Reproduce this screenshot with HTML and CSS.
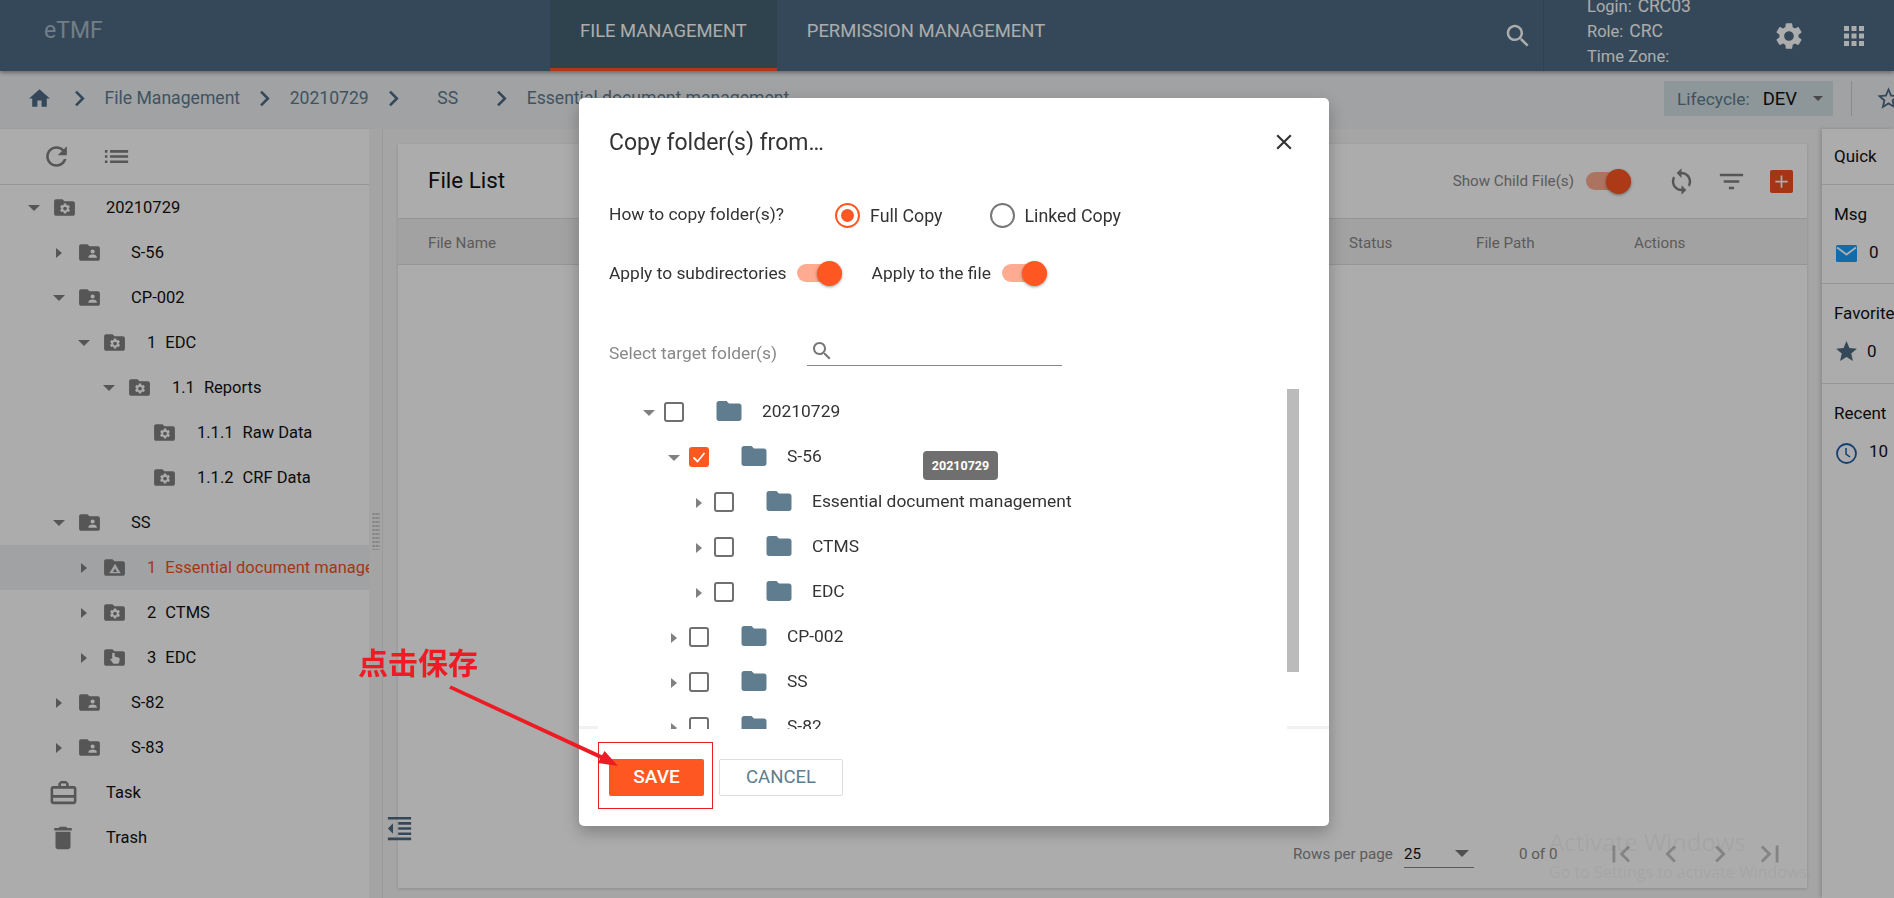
FILE: index.html
```html
<!DOCTYPE html>
<html lang="en">
<head>
<meta charset="utf-8">
<title>eTMF</title>
<link rel="stylesheet" href="styles.css">
</head>
<body>
<svg class="sprite" xmlns="http://www.w3.org/2000/svg">
  <symbol id="i-gear" viewBox="0 0 24 24"><path d="M19.14 12.94c.04-.3.06-.61.06-.94 0-.32-.02-.64-.07-.94l2.03-1.58c.18-.14.23-.41.12-.61l-1.92-3.32c-.12-.22-.37-.29-.59-.22l-2.39.96c-.5-.38-1.03-.7-1.62-.94l-.36-2.54c-.04-.24-.24-.41-.48-.41h-3.84c-.24 0-.43.17-.47.41l-.36 2.54c-.59.24-1.13.57-1.62.94l-2.39-.96c-.22-.08-.47 0-.59.22L2.74 8.87c-.12.21-.08.47.12.61l2.03 1.58c-.05.3-.09.63-.09.94s.02.64.07.94l-2.03 1.58c-.18.14-.23.41-.12.61l1.92 3.32c.12.22.37.29.59.22l2.39-.96c.5.38 1.03.7 1.62.94l.36 2.54c.05.24.24.41.48.41h3.84c.24 0 .44-.17.47-.41l.36-2.54c.59-.24 1.13-.56 1.62-.94l2.39.96c.22.08.47 0 .59-.22l1.92-3.32c.12-.22.07-.47-.12-.61l-2.01-1.58zM12 15.6c-1.98 0-3.6-1.62-3.6-3.6s1.62-3.6 3.6-3.6 3.6 1.62 3.6 3.6-1.62 3.6-3.6 3.6z"/></symbol>
  <symbol id="i-folder" viewBox="0 0 24 24"><path d="M10 4H4c-1.1 0-2 .9-2 2v12c0 1.1.9 2 2 2h16c1.1 0 2-.9 2-2V8c0-1.1-.9-2-2-2h-8l-2-2z"/></symbol>
  <symbol id="f-person" viewBox="0 0 24 24"><path fill-rule="evenodd" d="M20 6h-8l-2-2H4c-1.1 0-2 .9-2 2v12c0 1.1.9 2 2 2h16c1.1 0 2-.9 2-2V8c0-1.1-.9-2-2-2zM15 9a2 2 0 1 1 0 4a2 2 0 0 1 0-4zM19 17h-8v-1c0-1.33 2.67-2 4-2s4 .67 4 2v1z"/></symbol>
  <symbol id="f-gear" viewBox="0 0 24 24"><path d="M10 4H4c-1.1 0-2 .9-2 2v12c0 1.1.9 2 2 2h16c1.1 0 2-.9 2-2V8c0-1.1-.9-2-2-2h-8l-2-2z"/><g fill="#fff" transform="translate(12.5 13) scale(.5) translate(-12 -12)"><path d="M19.14 12.94c.04-.3.06-.61.06-.94 0-.32-.02-.64-.07-.94l2.03-1.58c.18-.14.23-.41.12-.61l-1.92-3.32c-.12-.22-.37-.29-.59-.22l-2.39.96c-.5-.38-1.03-.7-1.62-.94l-.36-2.54c-.04-.24-.24-.41-.48-.41h-3.84c-.24 0-.43.17-.47.41l-.36 2.54c-.59.24-1.13.57-1.62.94l-2.39-.96c-.22-.08-.47 0-.59.22L2.74 8.87c-.12.21-.08.47.12.61l2.03 1.58c-.05.3-.09.63-.09.94s.02.64.07.94l-2.03 1.58c-.18.14-.23.41-.12.61l1.92 3.32c.12.22.37.29.59.22l2.39-.96c.5.38 1.03.7 1.62.94l.36 2.54c.05.24.24.41.48.41h3.84c.24 0 .44-.17.47-.41l.36-2.54c.59-.24 1.13-.56 1.62-.94l2.39.96c.22.08.47 0 .59-.22l1.92-3.32c.12-.22.07-.47-.12-.61l-2.01-1.58zM12 15.6c-1.98 0-3.6-1.62-3.6-3.6s1.62-3.6 3.6-3.6 3.6 1.62 3.6 3.6-1.62 3.6-3.6 3.6z"/></g></symbol>
  <symbol id="f-drive" viewBox="0 0 24 24"><path fill-rule="evenodd" d="M20 6h-8l-2-2H4c-1.1 0-2 .9-2 2v12c0 1.1.9 2 2 2h16c1.1 0 2-.9 2-2V8c0-1.1-.9-2-2-2zM12.500 8.500l5.500 9H7zM12.500 13l-2 3.200h4z"/></symbol>
  <symbol id="f-hand" viewBox="0 0 24 24"><path fill-rule="evenodd" d="M20 6h-8l-2-2H4c-1.1 0-2 .9-2 2v12c0 1.1.9 2 2 2h16c1.1 0 2-.9 2-2V8c0-1.1-.9-2-2-2zM11 7.500c.7 0 1.200.5 1.200 1.200V11l4 1.200c.5.2.8.6.8 1.100l-.5 3.300c-.1.8-.7 1.400-1.500 1.400h-3.300c-.5 0-.9-.2-1.200-.6L7.800 13.700l.8-.8 1.200.7V8.700c0-.7.5-1.200 1.200-1.200z"/></symbol>
  <symbol id="i-home" viewBox="0 0 24 24"><path d="M10 20v-6h4v6h5v-8h3L12 3 2 12h3v8z"/></symbol>
  <symbol id="i-chev" viewBox="0 0 24 24"><path d="M10 6L8.590 7.410 13.170 12l-4.580 4.590L10 18l6-6z"/></symbol>
  <symbol id="i-prev" viewBox="0 0 24 24"><path d="M15.410 7.410L14 6l-6 6 6 6 1.410-1.410L10.830 12z"/></symbol>
  <symbol id="i-first" viewBox="0 0 24 24"><path d="M18.410 16.590L13.820 12l4.590-4.590L17 6l-6 6 6 6zM6 6h2v12H6z"/></symbol>
  <symbol id="i-last" viewBox="0 0 24 24"><path d="M5.590 7.410L10.180 12l-4.590 4.590L7 18l6-6-6-6zM16 6h2v12h-2z"/></symbol>
  <symbol id="i-search" viewBox="0 0 24 24"><path d="M15.500 14h-.79l-.28-.27C15.410 12.590 16 11.110 16 9.500 16 5.910 13.090 3 9.500 3S3 5.910 3 9.500 5.910 16 9.500 16c1.610 0 3.090-.59 4.230-1.570l.27.28v.79l5 4.990L20.490 19l-4.990-5zm-6 0C7.010 14 5 11.990 5 9.500S7.010 5 9.500 5 14 7.010 14 9.500 11.990 14 9.500 14z"/></symbol>
  <symbol id="i-apps" viewBox="0 0 24 24"><path d="M4 8h4V4H4v4zm6 12h4v-4h-4v4zm-6 0h4v-4H4v4zm0-6h4v-4H4v4zm6 0h4v-4h-4v4zm6-10v4h4V4h-4zm-6 4h4V4h-4v4zm6 6h4v-4h-4v4zm0 6h4v-4h-4v4z"/></symbol>
  <symbol id="i-staro" viewBox="0 0 24 24"><path d="M22 9.240l-7.190-.62L12 2 9.190 8.630 2 9.240l5.460 4.730L5.820 21 12 17.270 18.180 21l-1.630-7.030L22 9.240zM12 15.400l-3.760 2.270 1-4.280-3.320-2.880 4.380-.38L12 6.100l1.710 4.040 4.380.38-3.320 2.880 1 4.280L12 15.400z"/></symbol>
  <symbol id="i-star" viewBox="0 0 24 24"><path d="M12 17.270L18.180 21l-1.640-7.030L22 9.240l-7.190-.61L12 2 9.190 8.630 2 9.240l5.460 4.730L5.820 21z"/></symbol>
  <symbol id="i-refresh" viewBox="0 0 24 24"><path d="M17.650 6.350C16.200 4.900 14.210 4 12 4c-4.420 0-7.990 3.580-7.990 8s3.570 8 7.990 8c3.730 0 6.840-2.550 7.730-6h-2.080c-.82 2.330-3.040 4-5.650 4-3.310 0-6-2.690-6-6s2.690-6 6-6c1.660 0 3.140.69 4.220 1.780L13 11h7V4l-2.350 2.350z"/></symbol>
  <symbol id="i-list" viewBox="0 0 24 24"><path d="M3 13h2v-2H3v2zm0 4h2v-2H3v2zm0-8h2V7H3v2zm4 4h14v-2H7v2zm0 4h14v-2H7v2zM7 7v2h14V7H7z"/></symbol>
  <symbol id="i-task" viewBox="0 0 24 24"><path fill-rule="evenodd" d="M20 7h-4V5l-2-2h-4L8 5v2H4c-1.100 0-2 .9-2 2v10c0 1.100.9 2 2 2h16c1.100 0 2-.9 2-2V9c0-1.100-.9-2-2-2zM10 5h4v2h-4V5zM4 9h16v5H4V9zm0 7h16v3H4v-3z"/></symbol>
  <symbol id="i-trash" viewBox="0 0 24 24"><path d="M6 19c0 1.100.9 2 2 2h8c1.100 0 2-.9 2-2V7H6v12zM19 4h-3.500l-1-1h-5l-1 1H5v2h14V4z"/></symbol>
  <symbol id="i-sync" viewBox="0 0 24 24"><path d="M12 4V1L8 5l4 4V6c3.310 0 6 2.690 6 6 0 1.010-.25 1.970-.7 2.800l1.460 1.460C19.540 15.030 20 13.570 20 12c0-4.420-3.580-8-8-8zm0 14c-3.310 0-6-2.690-6-6 0-1.010.25-1.970.7-2.800L5.240 7.740C4.460 8.970 4 10.430 4 12c0 4.420 3.580 8 8 8v3l4-4-4-4v3z"/></symbol>
  <symbol id="i-filter" viewBox="0 0 24 24"><path d="M10 18h4v-2h-4v2zM3 6v2h18V6H3zm3 7h12v-2H6v2z"/></symbol>
  <symbol id="i-indent" viewBox="0 0 24 24"><path d="M11 17h10v-2H11v2zm-8-5l4 4V8l-4 4zm0 9h18v-2H3v2zM3 3v2h18V3H3zm8 6h10V7H11v2zm0 4h10v-2H11v2z"/></symbol>
  <symbol id="i-close" viewBox="0 0 24 24"><path d="M19 6.410L17.590 5 12 10.590 6.410 5 5 6.410 10.590 12 5 17.590 6.410 19 12 13.410 17.590 19 19 17.590 13.410 12z"/></symbol>
</svg>

<div class="page">
  <header class="topbar">
    <div class="logo">eTMF</div>
    <nav class="tabs">
      <a class="tab tab-active">FILE MANAGEMENT</a>
      <a class="tab">PERMISSION MANAGEMENT</a>
    </nav>
    <svg class="ic ic-search-top"><use href="#i-search"/></svg>
    <div class="userinfo">
      <div>Login:<span class="uv">CRC03</span></div>
      <div>Role:<span class="uv">CRC</span></div>
      <div>Time Zone:</div>
    </div>
    <svg class="ic ic-gear-top"><use href="#i-gear"/></svg>
    <svg class="ic ic-apps-top"><use href="#i-apps"/></svg>
  </header>

  <div class="crumbs">
    <svg class="ic ic-home"><use href="#i-home"/></svg>
    <svg class="ic ic-chev"><use href="#i-chev"/></svg>
    <span class="crumb">File Management</span>
    <svg class="ic ic-chev"><use href="#i-chev"/></svg>
    <span class="crumb">20210729</span>
    <svg class="ic ic-chev"><use href="#i-chev"/></svg>
    <span class="crumb crumb-wide">SS</span>
    <svg class="ic ic-chev"><use href="#i-chev"/></svg>
    <span class="crumb">Essential document management</span>
    <div class="lifecycle">
      <span class="lc-label">Lifecycle:</span>
      <span class="lc-value">DEV</span>
      <span class="caret"></span>
    </div>
    <span class="crumb-divider"></span>
    <svg class="ic ic-staro"><use href="#i-staro"/></svg>
  </div>

  <div class="workspace">
    <aside class="sidebar">
      <div class="side-tools">
        <svg class="ic ic-refresh"><use href="#i-refresh"/></svg>
        <svg class="ic ic-list"><use href="#i-list"/></svg>
      </div>
      <div class="side-tree">
        <div class="node l0"><span class="arr arr-down"></span><svg class="ic nf"><use href="#f-gear"/></svg><span class="nt">20210729</span></div>
        <div class="node l1"><span class="arr arr-right"></span><svg class="ic nf"><use href="#f-person"/></svg><span class="nt">S-56</span></div>
        <div class="node l1"><span class="arr arr-down"></span><svg class="ic nf"><use href="#f-person"/></svg><span class="nt">CP-002</span></div>
        <div class="node l2"><span class="arr arr-down"></span><svg class="ic nf"><use href="#f-gear"/></svg><span class="nt nt-num"><b>1</b>EDC</span></div>
        <div class="node l3"><span class="arr arr-down"></span><svg class="ic nf"><use href="#f-gear"/></svg><span class="nt nt-num"><b>1.1</b>Reports</span></div>
        <div class="node l4"><span class="arr"></span><svg class="ic nf"><use href="#f-gear"/></svg><span class="nt nt-num"><b>1.1.1</b>Raw Data</span></div>
        <div class="node l4"><span class="arr"></span><svg class="ic nf"><use href="#f-gear"/></svg><span class="nt nt-num"><b>1.1.2</b>CRF Data</span></div>
        <div class="node l1"><span class="arr arr-down"></span><svg class="ic nf"><use href="#f-person"/></svg><span class="nt">SS</span></div>
        <div class="node l2 node-sel"><span class="arr arr-right"></span><svg class="ic nf"><use href="#f-drive"/></svg><span class="nt nt-num"><b>1</b>Essential document management</span></div>
        <div class="node l2"><span class="arr arr-right"></span><svg class="ic nf"><use href="#f-gear"/></svg><span class="nt nt-num"><b>2</b>CTMS</span></div>
        <div class="node l2"><span class="arr arr-right"></span><svg class="ic nf"><use href="#f-hand"/></svg><span class="nt nt-num"><b>3</b>EDC</span></div>
        <div class="node l1"><span class="arr arr-right"></span><svg class="ic nf"><use href="#f-person"/></svg><span class="nt">S-82</span></div>
        <div class="node l1"><span class="arr arr-right"></span><svg class="ic nf"><use href="#f-person"/></svg><span class="nt">S-83</span></div>
        <div class="node node-task"><svg class="ic ic-task"><use href="#i-task"/></svg><span class="nt-plain">Task</span></div>
        <div class="node node-trash"><svg class="ic ic-trash"><use href="#i-trash"/></svg><span class="nt-plain">Trash</span></div>
      </div>
    </aside>

    <div class="splitter"><span class="grip"></span></div>

    <main class="content">
      <section class="card">
        <div class="card-head">
          <h2 class="card-title">File List</h2>
          <span class="show-child">Show Child File(s)</span>
          <span class="toggle toggle-page"><span class="thumb"></span></span>
          <svg class="ic ic-sync"><use href="#i-sync"/></svg>
          <svg class="ic ic-filter"><use href="#i-filter"/></svg>
          <span class="plus-btn">
            <svg viewBox="0 0 24 24" class="ic plus-glyph"><path d="M19 13h-6v6h-2v-6H5v-2h6V5h2v6h6v2z"/></svg>
          </span>
        </div>
        <div class="thead">
          <span>File Name</span><span>Status</span><span>File Path</span><span>Actions</span>
        </div>
        <div class="tbody"></div>
        <div class="pager">
          <span class="pg-label">Rows per page</span>
          <span class="pg-select"><span>25</span><span class="pg-caret"></span></span>
          <span class="pg-count">0 of 0</span>
          <svg class="ic pg-ic pg-first"><use href="#i-first"/></svg>
          <svg class="ic pg-ic pg-prev"><use href="#i-prev"/></svg>
          <svg class="ic pg-ic pg-next"><use href="#i-chev"/></svg>
          <svg class="ic pg-ic pg-last"><use href="#i-last"/></svg>
        </div>
      </section>
      <svg class="ic ic-indent"><use href="#i-indent"/></svg>
    </main>

    <aside class="quick">
      <div class="q-head">Quick</div>
      <div class="q-sec q-msg">
        <div class="q-title">Msg</div>
        <div class="q-row">
          <svg class="q-ic" viewBox="0 0 21 17"><rect width="21" height="17" rx="1.500" fill="#18a0ff"/><path d="M1 2.500l9.500 7 9.500-7" fill="none" stroke="#fff" stroke-width="2"/></svg>
          <span>0</span>
        </div>
      </div>
      <div class="q-sec q-fav">
        <div class="q-title">Favorite</div>
        <div class="q-row">
          <svg class="q-star"><use href="#i-star"/></svg>
          <span>0</span>
        </div>
      </div>
      <div class="q-sec q-rec">
        <div class="q-title">Recent</div>
        <div class="q-row">
          <svg class="q-ic q-clock" viewBox="0 0 21 21"><circle cx="10.500" cy="10.500" r="9.500" fill="none" stroke="#1e5fa8" stroke-width="1.800"/><path d="M10 5v6l4 3" fill="none" stroke="#1e5fa8" stroke-width="1.500"/></svg>
          <span>10</span>
        </div>
      </div>
    </aside>
  </div>
</div>

<div class="overlay"></div>

<div class="modal">
  <div class="m-head">
    <h1 class="m-title">Copy folder(s) from…</h1>
    <svg class="ic m-close"><use href="#i-close"/></svg>
  </div>
  <div class="m-row m-radios">
    <span class="m-label">How to copy folder(s)?</span>
    <span class="radio radio-on"><span class="dot"></span></span>
    <span class="m-text">Full Copy</span>
    <span class="radio radio-2"></span>
    <span class="m-text">Linked Copy</span>
  </div>
  <div class="m-row m-toggles">
    <span class="m-label">Apply to subdirectories</span>
    <span class="toggle toggle-a"><span class="thumb"></span></span>
    <span class="m-label m-file">Apply to the file</span>
    <span class="toggle toggle-b"><span class="thumb"></span></span>
  </div>
  <div class="m-row m-search">
    <span class="m-muted">Select target folder(s)</span>
    <span class="m-input"><svg class="ic m-search-ic"><use href="#i-search"/></svg></span>
  </div>
  <div class="m-tree">
    <div class="dn d0"><span class="arr arr-down"></span><span class="cb"></span><svg class="ic df"><use href="#i-folder"/></svg><span class="dt">20210729</span></div>
    <div class="dn d1"><span class="arr arr-down"></span><span class="cb cb-on"><svg viewBox="0 0 20 20" class="cb-tick"><path d="M4.500 10.500l4 4 7-8.500" fill="none" stroke="#fff" stroke-width="1.800"/></svg></span><svg class="ic df"><use href="#i-folder"/></svg><span class="dt">S-56</span></div>
    <div class="dn d2"><span class="arr arr-right"></span><span class="cb"></span><svg class="ic df"><use href="#i-folder"/></svg><span class="dt">Essential document management</span></div>
    <div class="dn d2"><span class="arr arr-right"></span><span class="cb"></span><svg class="ic df"><use href="#i-folder"/></svg><span class="dt">CTMS</span></div>
    <div class="dn d2"><span class="arr arr-right"></span><span class="cb"></span><svg class="ic df"><use href="#i-folder"/></svg><span class="dt">EDC</span></div>
    <div class="dn d1"><span class="arr arr-right"></span><span class="cb"></span><svg class="ic df"><use href="#i-folder"/></svg><span class="dt">CP-002</span></div>
    <div class="dn d1"><span class="arr arr-right"></span><span class="cb"></span><svg class="ic df"><use href="#i-folder"/></svg><span class="dt">SS</span></div>
    <div class="dn d1"><span class="arr arr-right"></span><span class="cb"></span><svg class="ic df"><use href="#i-folder"/></svg><span class="dt">S-82</span></div>
  </div>
  <div class="m-foot">
    <button class="btn btn-save">SAVE</button>
    <button class="btn btn-cancel">CANCEL</button>
  </div>
  <div class="tooltip">20210729</div>
</div>

<div class="watermark">
  <div class="wm-1">Activate Windows</div>
  <div class="wm-2">Go to Settings to activate Windows.</div>
</div>

<div class="note-text">点击保存</div>
<div class="note-box"></div>
<svg class="note-arrow" viewBox="0 0 180 90">
  <path d="M1 -1.500L152 68.200L154.600 64L168 79L148 76L150 71.800L-1 1.500Z" fill="#ed1c24"/>
</svg>
</body>
</html>
```
FILE: styles.css
```css
* { box-sizing: border-box; }
html, body { margin: 0; height: 100%; }
body {
  width: 1894px;
  height: 898px;
  overflow: hidden;
  position: relative;
  background: #fff;
  font-family: Roboto, "Liberation Sans", Arial, sans-serif;
  font-size: 16.5px;
  color: #111;
}
.sprite { display: none; }
.ic { display: block; flex: none; fill: currentColor; }

.page { display: flex; flex-direction: column; width: 1894px; height: 898px; overflow: hidden; }

/* top bar */
.topbar {
  flex: none; height: 71px; display: flex; align-items: center;
  background: #4d6c85; color: #fff;
  box-shadow: 0 2px 4px rgba(0,0,0,.35); position: relative; z-index: 2;
}
.logo { width: 550px; padding-left: 44px; font-size: 23px; color: rgba(255,255,255,.55); margin-top: -11px; }
.tabs { display: flex; align-self: stretch; }
.tab { display: flex; align-items: center; padding: 0 30px 8px; font-size: 18.4px; white-space: nowrap; border-bottom: 3px solid transparent; }
.tab-active { background: #456472; border-bottom-color: #ff5722; }
.ic-search-top { width: 30px; height: 30px; margin-left: auto; }
.userinfo {
  width: 240px; height: 71px; margin-left: 10px; padding-left: 43px;
  border-left: 1px solid #476278; line-height: 25px; font-size: 16.5px;
}
.userinfo div:first-child { margin-top: -6px; }
.uv { font-size: 17.5px; margin-left: 6px; }
.ic-gear-top { width: 32px; height: 32px; margin-left: -10px; }
.ic-apps-top { width: 30px; height: 30px; margin-left: 34px; margin-right: 25px; }

/* breadcrumb */
.crumbs {
  flex: none; height: 58px; display: flex; align-items: center;
  background: #eff1f4; padding: 0 0 4px 27px; color: #5e7c8d; overflow: hidden;
}
.ic-home { width: 25px; height: 25px; color: #4d6c85; }
.ic-chev { width: 31px; height: 31px; color: #4d6c85; margin-left: 12px; margin-right: 9.5px; }
.crumb { font-size: 17.6px; white-space: nowrap; }
.crumb ~ .ic-chev { margin-left: 9px; }
.crumb-wide { margin: 0 19px; }
.lifecycle {
  position: absolute; left: 1664px; top: 81px; width: 169px; height: 35px;
  display: flex; align-items: center; background: #d2e0e3; padding-left: 13px;
  font-size: 17.4px;
}
.lc-value { margin-left: 13px; color: #111; font-size: 18.5px; }
.caret { margin-left: 16px; border: 5px solid transparent; border-top: 5px solid #6b6b6b; border-bottom: 0; }
.crumb-divider { position: absolute; left: 1851px; top: 81px; width: 1px; height: 35px; background: #c5ced4; }
.ic-staro { position: absolute; left: 1875px; top: 85px; width: 27px; height: 27px; color: #4d6c85; }

/* workspace */
.workspace { flex: 1; display: flex; min-height: 0; background: #f5f5f5; }
.sidebar { flex: none; width: 369px; background: #fff; overflow: hidden; box-shadow: 1px 0 2px rgba(0,0,0,.1); display: flex; flex-direction: column; }
.side-tools { flex: none; height: 56px; display: flex; align-items: center; border-bottom: 1px solid #ddd; padding-left: 41px; color: #808080; }
.ic-refresh { width: 31px; height: 31px; margin-top: -1px; }
.ic-list { width: 31px; height: 31px; margin-left: 29px; margin-top: -1px; }
.node { height: 45px; display: flex; align-items: center; white-space: nowrap; }
.l0 { padding-left: 22px; }
.l1 { padding-left: 47px; }
.l2 { padding-left: 72px; }
.l3 { padding-left: 97px; }
.l4 { padding-left: 122px; }
.arr { flex: none; width: 24px; height: 12px; display: flex; align-items: center; justify-content: center; }
.arr-down::before { content: ""; border-left: 6px solid transparent; border-right: 6px solid transparent; border-top: 6.5px solid #808080; }
.arr-right::before { content: ""; border-top: 5.5px solid transparent; border-bottom: 5.5px solid transparent; border-left: 6.5px solid #808080; }
.nf { width: 25px; height: 25px; margin-left: 6px; color: #808080; }
.nt { margin-left: 29px; }
.nt-num { margin-left: 20px; }
.nt-num b { font-weight: 400; margin-right: 9px; }
.node-sel { background: #eff1f4; color: #f4511e; }
.node-task { padding-left: 48px; }
.node-trash { padding-left: 48px; }
.ic-task { width: 31px; height: 31px; color: #808080; }
.ic-trash { width: 30px; height: 30px; color: #808080; }
.nt-plain { margin-left: 27px; }
.node-trash .nt-plain { margin-left: 28px; }

.splitter { flex: none; width: 14px; border-right: 1px solid #e6e6e6; background: #f3f3f3; display: flex; flex-direction: column; align-items: center; padding-top: 383px; }
.grip { width: 8px; height: 38px; background-image: radial-gradient(circle, #c4c4c4 1.3px, transparent 1.5px); background-size: 3.5px 4px; }

.content { flex: 1; min-width: 0; padding: 15px 15px 10px; position: relative; }
.card { height: 100%; background: #fff; display: flex; flex-direction: column; box-shadow: 0 1px 3px rgba(0,0,0,.15); }
.card-head { flex: none; height: 75px; display: flex; align-items: center; padding: 0 14px 0 30px; border-bottom: 1px solid #ddd; }
.card-title { margin: -2px auto 0 0; font-size: 22.4px; font-weight: 400; color: #111; }
.show-child { font-size: 15.2px; color: #888; }
.toggle { flex: none; width: 45px; height: 18px; border-radius: 9px; background: #ffab91; display: flex; align-items: center; justify-content: flex-end; }
.thumb { flex: none; width: 25px; height: 25px; border-radius: 50%; background: #ff5722; box-shadow: 0 1px 3px rgba(0,0,0,.4); }
.toggle-page { margin-left: 12px; }
.ic-sync { width: 29px; height: 29px; margin-left: 36px; color: #808080; }
.ic-filter { width: 31px; height: 31px; margin-left: 20px; color: #808080; }
.plus-btn { flex: none; width: 23px; height: 23px; margin-left: 23px; background: #f4511e; border-radius: 2px; display: flex; align-items: center; justify-content: center; }
.plus-glyph { width: 21px; height: 21px; fill: #fff; }
.thead { flex: none; height: 46px; display: grid; grid-template-columns: 921px 127px 158px 1fr; align-items: center; padding: 2px 0 0 30px; background: #f1f1f1; border-bottom: 1px solid #ddd; font-size: 15.2px; color: #888; }
.tbody { flex: 1; }
.pager { flex: none; height: 68px; padding-left: 895px; display: flex; align-items: center; font-size: 15.2px; color: #888; }
.pg-select { width: 70px; height: 28px; margin-left: 11px; display: flex; align-items: center; justify-content: space-between; padding: 0 5px 0 0; border-bottom: 1px solid #888; color: #111; }
.pg-caret { border-left: 7px solid transparent; border-right: 7px solid transparent; border-top: 7px solid #777; }
.pg-count { margin-left: 45px; width: 37px; white-space: nowrap; }
.pg-ic { width: 34px; height: 34px; color: #c4c4c4; }
.pg-first { margin-left: 48px; }
.pg-prev { margin-left: 16px; }
.pg-next { margin-left: 15px; }
.pg-last { margin-left: 16px; }
.ic-indent { position: absolute; left: 1px; top: 684px; width: 31px; height: 31px; color: #4d6c85; }

.quick { flex: none; width: 72px; background: #fff; overflow: hidden; white-space: nowrap; box-shadow: -2px 0 4px rgba(0,0,0,.15); font-size: 17px; padding-left: 12px; }
.q-head { height: 56px; margin-left: -12px; padding: 17px 0 0 12px; border-bottom: 1px solid #ddd; }
.q-sec { margin-left: -12px; padding: 17px 0 0 12px; border-bottom: 1px solid #ddd; }
.q-msg { height: 99px; }
.q-fav { height: 100px; }
.q-rec { border-bottom: 0; }
.q-title { height: 24px; line-height: 24px; }
.q-row { display: flex; align-items: flex-start; margin-top: 16px; line-height: 20px; }
.q-row span { margin-left: 12px; }
.q-ic { flex: none; width: 21px; height: 17px; margin-left: 2px; margin-top: 3px; }
.q-clock { height: 21px; margin-top: 2px; }
.q-star { flex: none; width: 25px; height: 25px; fill: #4d6c85; margin-top: -2px; margin-right: -2px; }
.q-fav .q-row span { margin-left: 10px; }

/* modal */
.overlay { position: fixed; inset: 0; background: rgba(0,0,0,.325); z-index: 10; }
.modal {
  position: absolute; left: 579px; top: 98px; width: 750px; height: 728px; z-index: 20;
  background: #fff; border-radius: 5px; display: flex; flex-direction: column;
  box-shadow: 0 6px 16px rgba(0,0,0,.25); color: #333; overflow: hidden;
}
.m-head { flex: none; height: 88px; display: flex; align-items: center; padding-left: 30px; }
.m-title { margin: 1px 0 0; font-size: 23px; font-weight: 400; color: #333; }
.m-close { width: 26px; height: 26px; margin-left: auto; margin-right: 32px; color: #333; }
.m-row { flex: none; display: flex; align-items: center; padding-left: 30px; font-size: 17.4px; }
.m-radios { height: 56px; }
.m-toggles { height: 62px; }
.m-search { height: 85px; align-items: flex-start; padding-top: 37px; }
.m-text { margin-left: 10px; font-size: 17.8px; }
.radio { flex: none; width: 25px; height: 25px; border-radius: 50%; border: 2px solid #777; display: flex; align-items: center; justify-content: center; margin-top: 3px; }
.radio-on { border-color: #ff5722; margin-left: 51px; }
.radio-2 { margin-left: 47px; }
.dot { width: 13px; height: 13px; border-radius: 50%; background: #ff5722; }
.m-radios .m-label { margin-top: -1px; }
.m-radios .m-text { margin-top: 3px; }
.toggle-a { margin-left: 10px; }
.m-file { margin-left: 30px; }
.toggle-b { margin-left: 11px; }
.m-muted { color: #888; margin-top: 2px; }
.m-input { width: 255px; height: 25px; margin-left: 30px; border-bottom: 1px solid #888; display: block; }
.m-search-ic { width: 24px; height: 24px; margin-left: 3px; margin-top: -2px; color: #777; }
.m-tree { flex: none; height: 340px; position: relative; overflow: hidden; }
.m-tree::before { content: ""; position: absolute; right: 30px; top: 0; width: 12px; height: 283px; background: #bbb; }
.m-tree::after {
  content: ""; position: absolute; left: 0; right: 0; bottom: 0; height: 3px;
  background: linear-gradient(#f1f1f1,#f1f1f1) left/19px 100% no-repeat, linear-gradient(#f1f1f1,#f1f1f1) right/42px 100% no-repeat;
}
.dn { height: 45px; display: flex; align-items: center; white-space: nowrap; }
.d0 { padding-left: 58px; }
.d1 { padding-left: 83px; }
.d2 { padding-left: 108px; }
.dn .arr { margin-top: 3px; }
.cb { flex: none; width: 20px; height: 20px; margin-left: 3px; margin-top: 1px; border: 2px solid #707070; border-radius: 3px; }
.cb-on { background: #ff5722; border-color: #ff5722; }
.cb-tick { display: block; width: 20px; height: 20px; margin: -2px; }
.df { width: 30px; height: 30px; margin-left: 30px; color: #5f7d8e; margin-top: -1px; }
.dt { margin-left: 18px; font-size: 17.4px; margin-top: -2px; }
.m-foot { flex: 1; display: flex; align-items: flex-start; padding: 30px 0 0 30px; }
.btn { height: 37px; border-radius: 2px; font-family: inherit; padding: 0 0 2px; }
.btn-save { width: 95px; background: #ff5722; border: 0; color: #fff; font-size: 19px; font-weight: 500; }
.btn-cancel { width: 124px; margin-left: 15px; background: #fff; border: 1px solid #ddd; color: #5f7d8e; font-size: 18.6px; }
.tooltip {
  position: absolute; left: 344px; top: 353px; width: 75px; height: 29px;
  background: #6f6f6f; color: #fff; border-radius: 4px; font-size: 12.5px; font-weight: 700;
  display: flex; align-items: center; justify-content: center;
}

/* watermark and annotations */
.watermark { position: absolute; left: 1549px; top: 826px; z-index: 25; color: rgba(0,0,0,.04); font-family: "Open Sans", sans-serif; white-space: nowrap; pointer-events: none; }
.wm-1 { font-size: 24px; line-height: 32px; }
.wm-2 { font-size: 16px; line-height: 28px; }
.note-text { position: absolute; left: 358px; top: 640px; z-index: 30; font-family: "Noto Sans CJK SC", sans-serif; font-size: 30px; line-height: 42px; font-weight: 700; color: #ed1c24; white-space: nowrap; }
.note-box { position: absolute; left: 598px; top: 742px; width: 115px; height: 67px; border: 1px solid #ed1c24; z-index: 30; }
.note-arrow { position: absolute; left: 450px; top: 687px; width: 180px; height: 90px; z-index: 30; overflow: visible; }
```
